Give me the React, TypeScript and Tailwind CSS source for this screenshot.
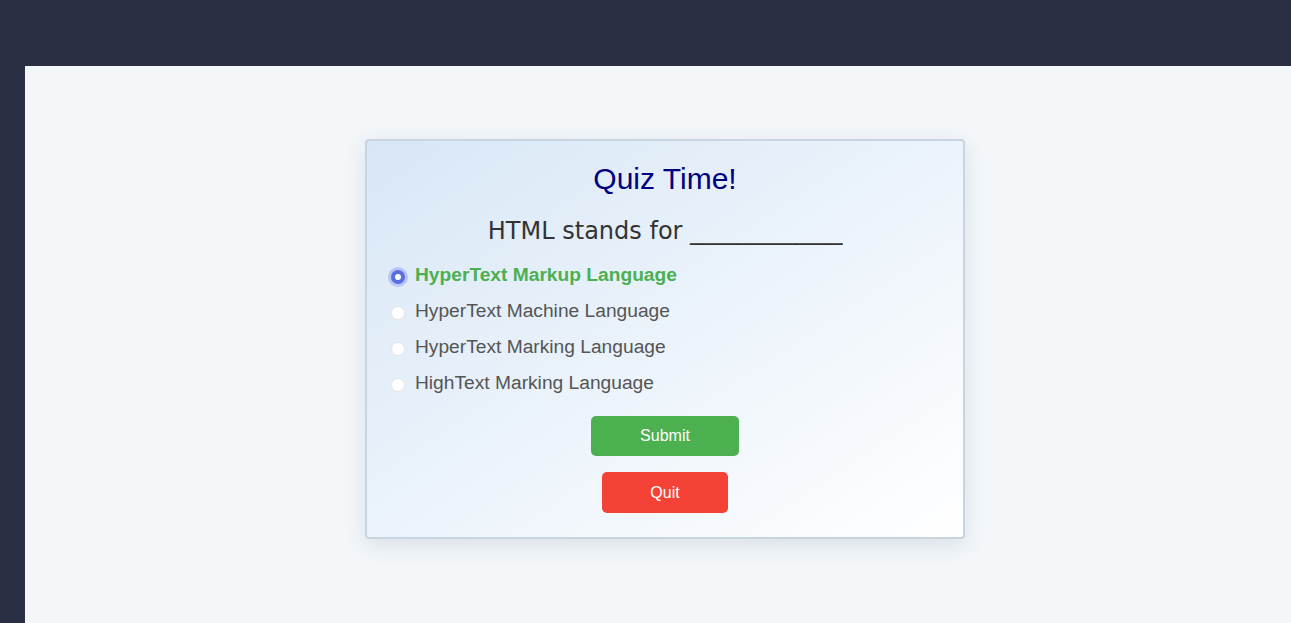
import React, { useState } from "react";

const options = [
  "HyperText Markup Language",
  "HyperText Machine Language",
  "HyperText Marking Language",
  "HighText Marking Language",
];

export default function App() {
  const [selected, setSelected] = useState(0);
  return (
    <div className="w-[1291px] h-[623px] overflow-hidden bg-[#2a2f44] pt-[66px] pl-[25px]">
      <div className="w-[1280px] h-[557px] bg-[#f3f7fa] pt-[73px]">
        <div
          className="mx-auto w-[600px] border-2 border-[#c8d5e1] rounded-[4px] bg-gradient-to-br from-[#d8e7f6] to-[#ffffff] shadow-[0_6px_22px_rgba(40,60,90,0.12)] pt-[21px] px-[24px] pb-[24px] flex flex-col"
          style={{ fontFamily: '"Liberation Sans", Arial, sans-serif' }}
        >
          <h1 className="text-center text-[30px] leading-[33px] text-[#000080]">Quiz Time!</h1>
          <p
            className="mt-[22px] text-center text-[24px] leading-[28px] text-[#333333]"
            style={{ fontFamily: '"DejaVu Sans", Verdana, sans-serif' }}
          >
            HTML stands for <span className="tracking-[-0.3px]">_____________</span>
          </p>
          <div className="mt-[12px] flex flex-col">
            {options.map((o, i) => {
              const on = i === selected;
              return (
                <label
                  key={o}
                  onClick={() => setSelected(i)}
                  className="h-[36px] flex items-center cursor-pointer"
                >
                  <span
                    className={
                      on
                        ? "mt-[3px] w-[14px] h-[14px] rounded-full bg-[#5a6ee0] flex items-center justify-center shadow-[0_0_0_3px_rgba(110,130,240,0.35)]"
                        : "mt-[3px] w-[14px] h-[14px] rounded-full bg-white border border-[#e4e6ea]"
                    }
                  >
                    {on && <span className="w-[6px] h-[6px] rounded-full bg-white" />}
                  </span>
                  <span
                    className={
                      on
                        ? "ml-[10px] text-[19.2px] leading-[22px] font-bold text-[#4caf50]"
                        : "ml-[10px] text-[19.2px] leading-[22px] text-[#555555]"
                    }
                  >
                    {o}
                  </span>
                </label>
              );
            })}
          </div>
          <button className="mt-[15px] mx-auto block w-[148px] h-[40px] rounded-[5px] bg-[#4caf50] text-white text-[16px] leading-[18px]">
            Submit
          </button>
          <button className="mt-[16px] mx-auto block w-[126px] h-[41px] rounded-[5px] bg-[#f44336] text-white text-[16px] leading-[18px]">
            Quit
          </button>
        </div>
      </div>
    </div>
  );
}
